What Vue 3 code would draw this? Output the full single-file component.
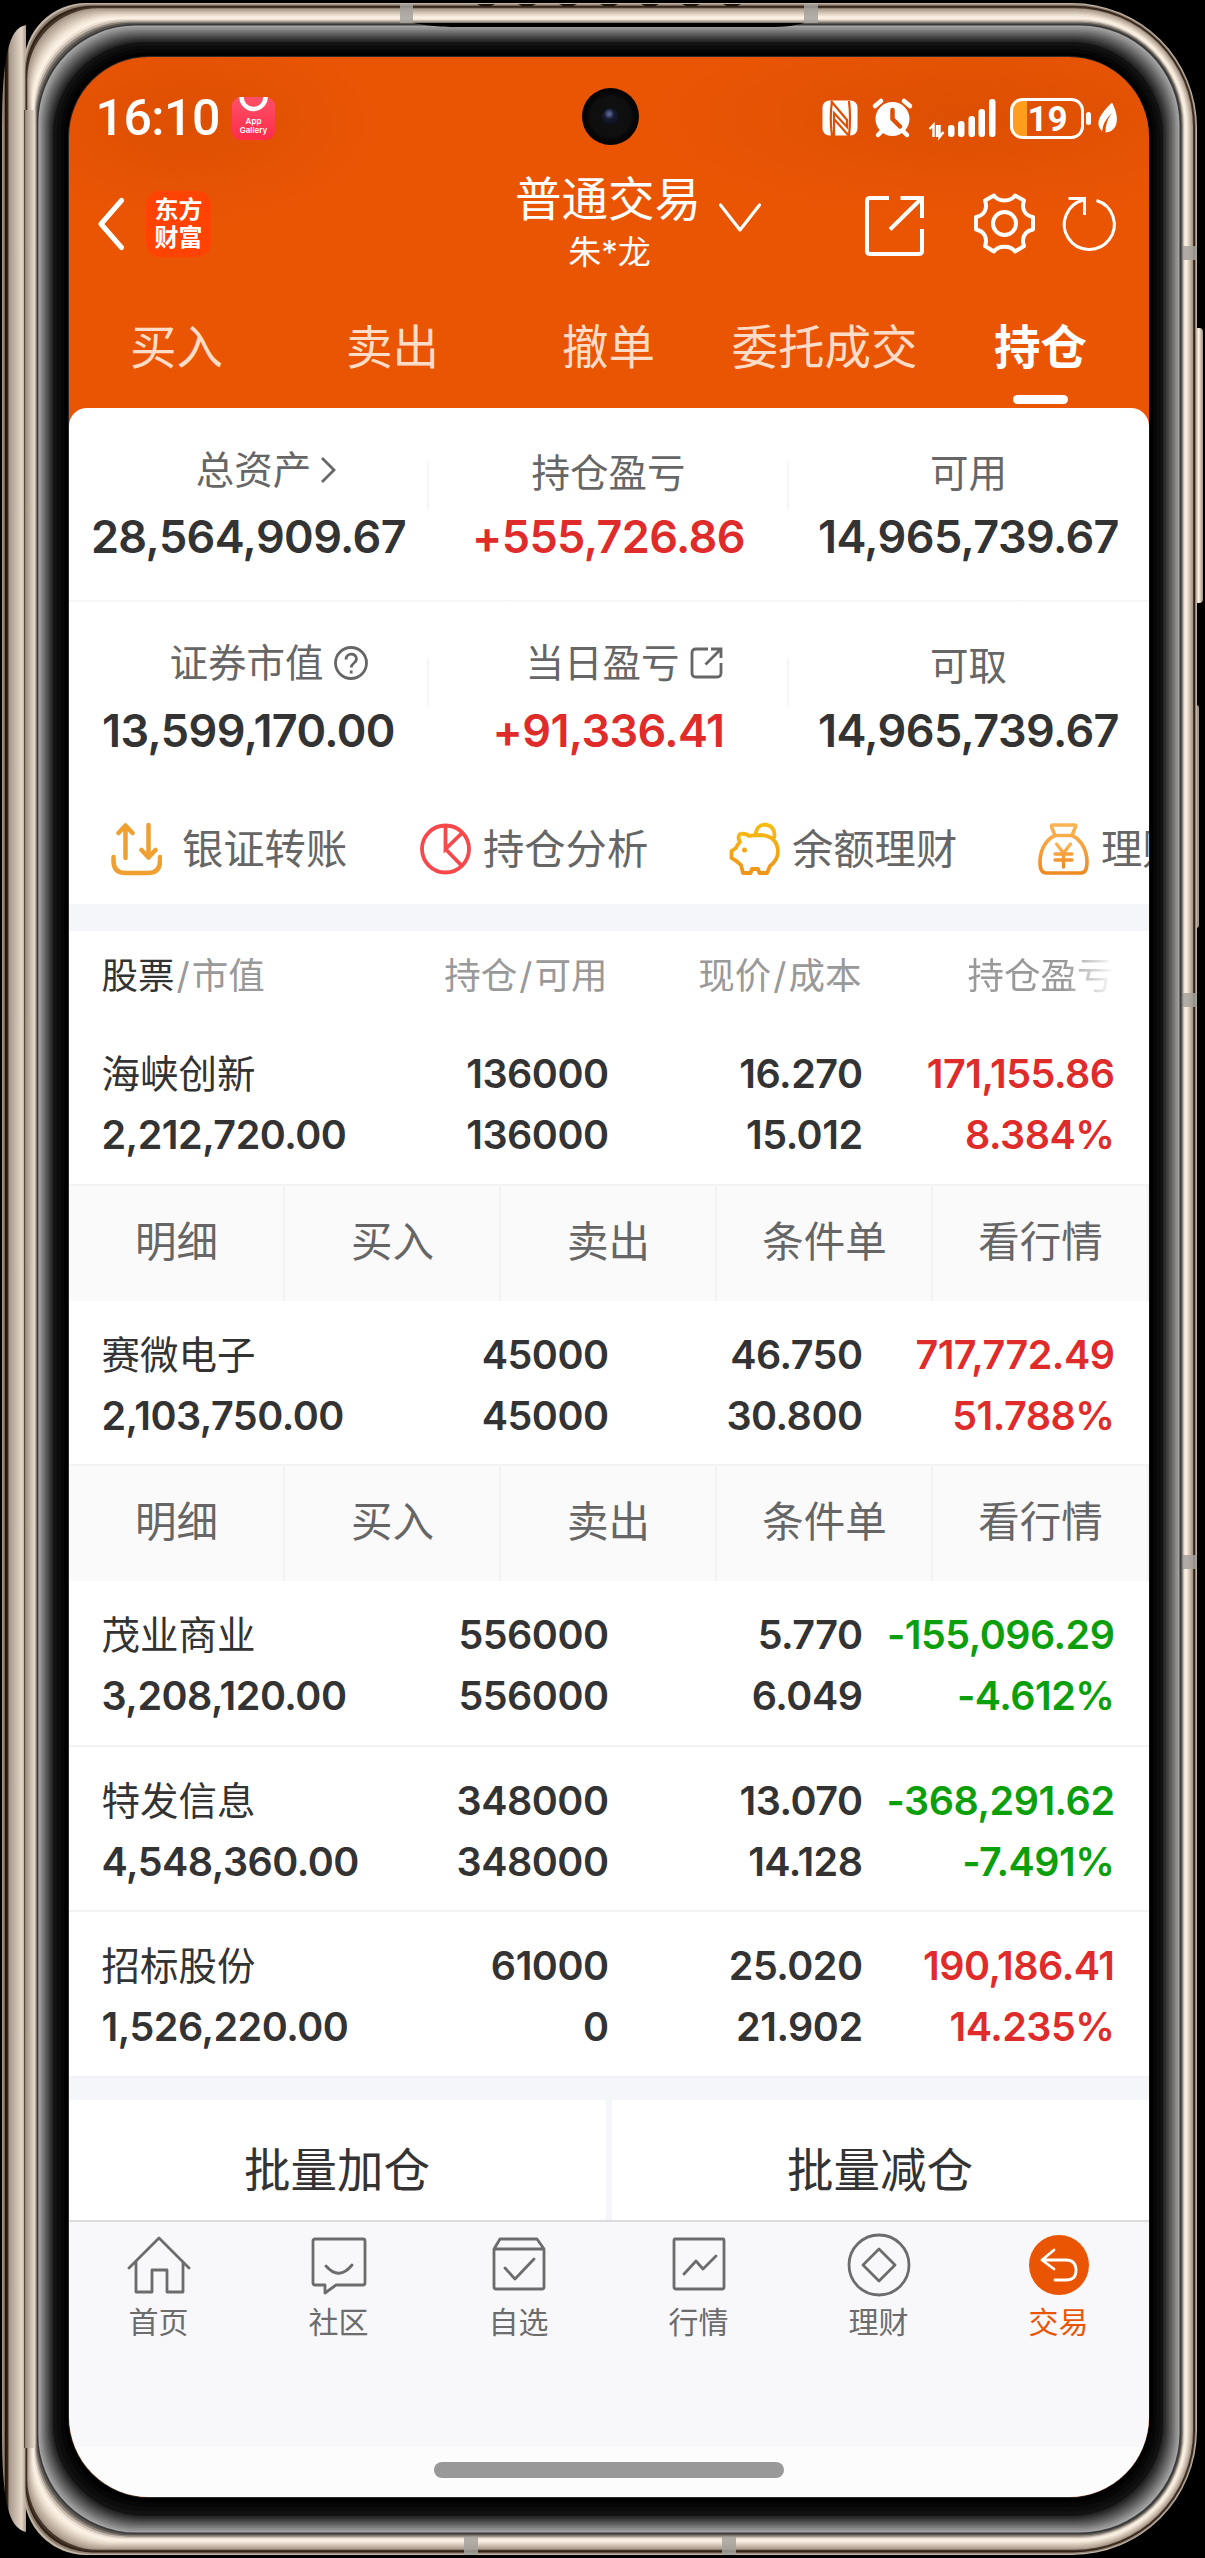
<template>
  <div class="stage">
    <svg class="phone" width="1205" height="2558" viewBox="0 0 1205 2558" aria-hidden="true">
      <defs>
        <linearGradient id="backPanel" x1="2" x2="25" y1="0" y2="0" gradientUnits="userSpaceOnUse">
          <stop offset="0" stop-color="#a5968a" />
          <stop offset="0.1" stop-color="#8a7868" />
          <stop offset="0.15" stop-color="#1d130c" />
          <stop offset="0.26" stop-color="#3a2c20" />
          <stop offset="0.3" stop-color="#a5968a" />
          <stop offset="0.85" stop-color="#e4d6c7" />
          <stop offset="1" stop-color="#b8a797" />
        </linearGradient>
        <linearGradient id="leftRail" x1="24" x2="37" y1="0" y2="0" gradientUnits="userSpaceOnUse">
          <stop offset="0" stop-color="#33241a" />
          <stop offset="0.12" stop-color="#9c8d7e" />
          <stop offset="0.6" stop-color="#d2c4b4" />
          <stop offset="0.8" stop-color="#e6d8c8" />
          <stop offset="0.9" stop-color="#b3a697" />
          <stop offset="1" stop-color="#5a5651" />
        </linearGradient>
        <linearGradient id="sideKey" x1="0" x2="1" y1="0" y2="0">
          <stop offset="0" stop-color="#6a5c50" />
          <stop offset="0.5" stop-color="#fff5e6" />
          <stop offset="1" stop-color="#a09080" />
        </linearGradient>
      </defs>
      <path d="M26 25C8 28 2 60 2 130V2430C2 2500 8 2528 26 2532Z" fill="url(#backPanel)" />
      <rect x="1194" y="328" width="9" height="275" rx="4" fill="url(#sideKey)" />
      <rect x="1192" y="705" width="7" height="223" rx="3" fill="#a39589" />
      <path v-for="(ring, i) in rings" :key="i" :d="ring.d" :fill="ring.fill" />
      <rect x="24" y="110" width="13" height="2338" fill="url(#leftRail)" />
      <path d="M413 23H804C790 27 780 27 760 27H460C435 27 425 25 413 23Z" fill="#000" />
      <rect v-for="(b, i) in bands" :key="'b' + i" :x="b[0]" :y="b[1]" :width="b[2]" :height="b[3]" fill="#a5a29c" opacity="0.85" />
      <path v-for="x in grille" :key="x" :d="`M${x} 4h18l-4 2h-10z`" fill="#1b120c" />
    </svg>

    <div class="screen">
      <header class="top">
        <div class="status">
          <span class="clock">16:10</span>
          <span class="gallery">
            <svg width="43" height="20" viewBox="0 0 43 20"><path d="M9.500 0a12 12 0 0 0 24 0" fill="none" stroke="#fff" stroke-width="4.500" /></svg>
            <span>App<br>Gallery</span>
          </span>
          <span class="camera"><i></i></span>
          <svg class="status-icons" width="280" height="44" viewBox="840 96 280 44" fill="#fff">
            <!-- nfc -->
            <rect x="822.500" y="100.500" width="35" height="35" rx="7" />
            <path d="M832 101Q829.500 118 832 136M831 101 847 120V127L834 113V136M849 101Q851 118 849 136L834 119" fill="none" stroke="#de5003" stroke-width="2.200" />
            <!-- alarm -->
            <circle cx="892.500" cy="119" r="17" />
            <path d="M875 106 881 101M910 106 904 101" stroke="#fff" stroke-width="4.500" stroke-linecap="round" />
            <path d="M878 135 883 130M907 135 902 130" stroke="#fff" stroke-width="4.500" stroke-linecap="round" />
            <path d="M892.500 110V119L900 126.500" fill="none" stroke="#de5003" stroke-width="4.500" stroke-linecap="round" stroke-linejoin="round" />
            <!-- signal -->
            <path d="M929.500 129 933.500 125V137M937 125V137M939.500 125V137L943.500 132" fill="none" stroke="#fff" stroke-width="2.400" />
            <rect x="948" y="125" width="6.500" height="12" rx="3" />
            <rect x="958" y="121" width="6.500" height="16" rx="3" />
            <rect x="968.500" y="116" width="6.500" height="21" rx="3" />
            <rect x="978.500" y="109" width="6.500" height="28" rx="3" />
            <rect x="989" y="99" width="6.500" height="38" rx="3" />
            <!-- battery -->
            <path d="M1020 101H1027V136H1020Q1013 136 1013 129V108Q1013 101 1020 101Z" fill="#ff9d1c" />
            <rect x="1011.500" y="99.500" width="71" height="38" rx="11" fill="none" stroke="#fff" stroke-width="3" />
            <rect x="1086" y="112" width="5" height="13" rx="2.500" />
            <text x="1047.500" y="131" text-anchor="middle" class="battery-text">19</text>
            <!-- leaf -->
            <path d="M1112 102.500Q1120 118 1115 127 1112 132 1105.500 132.500 1105 122 1112 113 1103 121 1102 131.500 1096 125 1100 117 1104 110 1112 102.500Z" />
          </svg>
        </div>

        <div class="nav">
          <svg class="back" width="30" height="54" viewBox="0 0 30 54"><path d="M25.500 3.500 5 27 25.500 50.500" fill="none" stroke="#fff" stroke-width="5" stroke-linecap="round" stroke-linejoin="round" /></svg>
          <div class="logo"><span>东方</span><span>财富</span></div>
          <div class="title">
            <div class="name">普通交易</div>
            <div class="user">朱*龙</div>
          </div>
          <svg class="down" width="44" height="32" viewBox="0 0 44 32"><path d="M2.500 3 22 28 41.500 3" fill="none" stroke="#fff" stroke-width="3.200" stroke-linejoin="round" stroke-linecap="round" /></svg>
          <svg class="tools" width="256" height="64" viewBox="862 192 256 64" fill="none" stroke="#fff" stroke-width="4">
            <path d="M888 198H869q-3 0-3 3v50q0 3 3 3h49q3 0 3-3V229" />
            <path d="M899.500 198H921v20M920 199 889 229.500" />
            <path d="M993 195.500C997 202 1010 202 1014 195.500L1023 200.500C1020 209 1024 215.500 1032 217V229.500C1024 231 1020 238 1023 246L1014 251.500C1010 245 997 245 993 251.500L984 246C987 238 983 231 975 229.500V217C983 215.500 987 209 984 200.500Z" stroke-linejoin="round" />
            <circle cx="1003.500" cy="223.500" r="11.500" />
            <path d="M1095.500 200.500A25 25 0 1 1 1083 200" stroke-width="3" />
            <path d="M1067.500 198.500H1083.500V215" stroke-width="3" />
          </svg>
        </div>

        <nav class="tabs">
          <div v-for="tab in tabs" :key="tab" class="tab" :class="{ active: tab === '持仓' }">{{ tab }}</div>
        </nav>
      </header>

      <main class="content">
        <section class="summary">
          <div v-for="(row, i) in summary" :key="i" class="summary-row">
            <div v-for="cell in row" :key="cell.label" class="cell">
              <div class="label" :class="cell.icon || 'plain'">
                <span>{{ cell.label }}</span>
                <svg v-if="cell.icon === 'arrow'" width="20" height="30" viewBox="0 0 20 30"><path d="M3 3 15 15 3 27" /></svg>
                <svg v-if="cell.icon === 'help'" width="34" height="34" viewBox="0 0 34 34">
                  <circle cx="17" cy="17" r="15.500" />
                  <path d="M12 13.500c0-7 10.500-7 10.500-.5 0 4-5.300 4-5.300 8.500M17.200 24.500v3" />
                </svg>
                <svg v-if="cell.icon === 'open'" width="34" height="34" viewBox="0 0 34 34">
                  <path d="M18 3H6Q2 3 2 7V27Q2 31 6 31H27Q31 31 31 27V17M21 3H31V12M30.500 3.500 15.500 18.500" />
                </svg>
              </div>
              <div class="figure" :class="{ up: cell.value.startsWith('+') }">{{ cell.value }}</div>
            </div>
          </div>
        </section>

        <section class="shortcuts">
          <div class="shortcut wide">
            <svg width="51" height="54" viewBox="0 0 51 54" fill="none" stroke="#f0a030" stroke-width="4.500" stroke-linecap="round" stroke-linejoin="round">
              <path d="M14.500 36V4M7.500 11l7-7.500 7 7.500M37.500 3V35M30.500 28l7 7.500 7-7.500M2.500 35v4q0 12 12 12H37q12 0 12-12V35" />
            </svg>
            <span>银证转账</span>
          </div>
          <div class="shortcut">
            <svg width="51" height="54" viewBox="0 0 51 54" fill="none" stroke="#f7484b" stroke-width="3.800">
              <circle cx="25.500" cy="27" r="23.500" />
              <path d="M25.500 3V27L42 11M25.500 27 42 44" />
            </svg>
            <span>持仓分析</span>
          </div>
          <div class="shortcut">
            <svg width="51" height="54" viewBox="0 0 51 54" fill="none" stroke="url(#pig)" stroke-width="3.800" stroke-linejoin="round">
              <defs><linearGradient id="pig" x1="0" y1="0" x2="0" y2="1"><stop offset="0" stop-color="#f6bd12" /><stop offset="1" stop-color="#ef9518" /></linearGradient></defs>
              <path d="M11 12Q8 15 11 20Q8 23 7 26L2.500 29V36Q7 38 12 43L14 51H21.500L23 47H29L30.500 51H38L41 44Q49 38 49 29Q48 14 32 13Q25 13 20 14Q17 11 11 12ZM26.500 12Q28 2.500 36.500 2.500Q46 4 45.500 14L44 18" />
              <circle cx="15.500" cy="28" r="2.500" fill="#f0a818" stroke="none" />
            </svg>
            <span>余额理财</span>
          </div>
          <div class="shortcut">
            <svg width="51" height="54" viewBox="0 0 51 54" fill="none" stroke="url(#bag)" stroke-width="3.600" stroke-linejoin="round" stroke-linecap="round">
              <defs><linearGradient id="bag" x1="0" y1="0" x2="0" y2="1"><stop offset="0" stop-color="#fbb455" /><stop offset="1" stop-color="#ee8a22" /></linearGradient></defs>
              <path d="M14 3H37Q38.500 3 37 6L34 13.500H17L14 6Q13 3 14 3ZM17 13.500C7 18 2 29 2 40Q2 51 8 51H43Q49 51 49 40C49 29 44 18 34 13.500" />
              <path d="M18.500 22 25.500 31 32.500 22M17 32H34M17 38H34M25.500 31V45" stroke-width="3.300" />
            </svg>
            <span>理财</span>
          </div>
        </section>

        <div class="gap"></div>

        <section class="holdings">
          <div class="holding-head">
            <span><b>股票</b><em>/</em>市值</span>
            <span>持仓<em>/</em>可用</span>
            <span>现价<em>/</em>成本</span>
            <span class="faded">持仓盈亏</span>
          </div>
          <template v-for="h in holdings" :key="h.name">
            <div class="holding">
              <div><span class="stock">{{ h.name }}</span><span>{{ h.value }}</span></div>
              <div><span>{{ h.total }}</span><span>{{ h.usable }}</span></div>
              <div><span>{{ h.price }}</span><span>{{ h.cost }}</span></div>
              <div :class="h.profit.startsWith('-') ? 'loss' : 'up'"><span>{{ h.profit }}</span><span>{{ h.rate }}</span></div>
            </div>
            <div v-if="h.open" class="actions">
              <span v-for="a in actions" :key="a">{{ a }}</span>
            </div>
          </template>
        </section>

        <section class="batch">
          <div>批量加仓</div>
          <div>批量减仓</div>
        </section>
      </main>

      <footer class="tabbar">
        <div v-for="item in menu" :key="item.label" class="menu" :class="{ current: item.current }">
          <svg width="64" height="64" viewBox="0 0 64 64">
            <circle v-if="item.current" cx="32" cy="32" r="30" fill="#ea5504" stroke="none" />
            <path :d="item.path" />
          </svg>
          <span>{{ item.label }}</span>
        </div>
      </footer>
      <div class="home-area"><div class="home-bar"></div></div>
    </div>
  </div>
</template>

<script setup>
const tabs = ['买入', '卖出', '撤单', '委托成交', '持仓']

const summary = [
  [
    { label: '总资产', value: '28,564,909.67', icon: 'arrow' },
    { label: '持仓盈亏', value: '+555,726.86' },
    { label: '可用', value: '14,965,739.67' }
  ],
  [
    { label: '证券市值', value: '13,599,170.00', icon: 'help' },
    { label: '当日盈亏', value: '+91,336.41', icon: 'open' },
    { label: '可取', value: '14,965,739.67' }
  ]
]

const holdings = [
  { name: '海峡创新', value: '2,212,720.00', total: '136000', usable: '136000', price: '16.270', cost: '15.012', profit: '171,155.86', rate: '8.384%', open: true },
  { name: '赛微电子', value: '2,103,750.00', total: '45000', usable: '45000', price: '46.750', cost: '30.800', profit: '717,772.49', rate: '51.788%', open: true },
  { name: '茂业商业', value: '3,208,120.00', total: '556000', usable: '556000', price: '5.770', cost: '6.049', profit: '-155,096.29', rate: '-4.612%' },
  { name: '特发信息', value: '4,548,360.00', total: '348000', usable: '348000', price: '13.070', cost: '14.128', profit: '-368,291.62', rate: '-7.491%' },
  { name: '招标股份', value: '1,526,220.00', total: '61000', usable: '0', price: '25.020', cost: '21.902', profit: '190,186.41', rate: '14.235%' }
]

const actions = ['明细', '买入', '卖出', '条件单', '看行情']

const menu = [
  { label: '首页', path: 'M2 35 32 5 62 35M9 29V59H25V37H40V59H56V29' },
  { label: '社区', path: 'M8 6H56Q58 6 58 8V50Q58 52 56 52H29L18 60V52H8Q6 52 6 50V8Q6 6 8 6ZM19 33Q32 48 45 32' },
  { label: '自选', path: 'M7 16 13 6H50L57 16V54Q57 56 55 56H9Q7 56 7 54ZM7 16H57M18 35 28 46 47 26' },
  { label: '行情', path: 'M8 6H56Q57 6 57 8V54Q57 56 55 56H9Q7 56 7 54V8Q7 6 8 6ZM17 41 29 28 36 36 49 23' },
  { label: '理财', path: 'M2 32A30 30 0 1 1 62 32A30 30 0 1 1 2 32ZM32 16 48 32 32 48 16 32Z' },
  { label: '交易', path: 'M27 17 15 27 27 36M15 27H39Q49 27 49 37.500Q49 47 39 47H28', current: true }
]

// metal frame and glass bezel: nested shapes shaded from the outside in
const outer = [24, 3, 1197, 2555, 62, 125]
const inner = [37, 24, 1181, 2534, 98, 100]
const glass = [53, 42, 1163, 2516, 92, 92]
const screen = [68, 56, 1149.5, 2498, 81, 81]

const shape = ([l, t, r, b, rl, rr]) =>
  `M${l + rl} ${t}H${r - rr}A${rr} ${rr} 0 0 1 ${r} ${t + rr}V${b - rr}A${rr} ${rr} 0 0 1 ${r - rr} ${b}` +
  `H${l + rl}A${rl} ${rl} 0 0 1 ${l} ${b - rl}V${t + rl}A${rl} ${rl} 0 0 1 ${l + rl} ${t}Z`

const between = (a, b, t) => a.map((v, i) => v + (b[i] - v) * t)

const blend = (from, to, colors) =>
  colors.map((fill, i) => ({ d: shape(between(from, to, i / colors.length)), fill }))

const rings = [
  ...blend(outer, inner, ['#c3b5a6', '#8f8072', '#33241a', '#46362a', '#a89889', '#b8a899', '#c4b5a6', '#d3c5b6', '#e0d3c4', '#ede1d3', '#f6ecde', '#fbf2e5', '#ede2d5', '#c9bdb0', '#8d857c', '#5a5651']),
  ...blend(inner, glass, ['#3a3a3a', '#a2a2a2', '#959595', '#898989', '#7b7b7b', '#6e6e6e', '#616161', '#555', '#484848', '#3c3c3c', '#303030', '#262626']),
  ...blend(glass, screen, ['#121212', '#0c0c0c', '#060606', '#000']),
  { d: shape(screen), fill: '#2a2a2a' }
]

const bands = [
  [400, 4, 13, 19],
  [804, 4, 14, 19],
  [464, 2537, 14, 18],
  [722, 2537, 14, 18],
  [1183, 246, 14, 14],
  [1183, 993, 14, 14],
  [1183, 1555, 14, 14]
]

const grille = [477, 518, 559, 600, 641, 682, 723]
</script>

<style>
body {
  margin: 0;
  background: #000;
}
</style>

<style scoped>
.stage {
  position: relative;
  box-sizing: border-box;
  width: 1205px;
  height: 2558px;
  padding: 57px 0 0 68.500px;
  background: #000;
  font-family: Inter, "Noto Sans CJK SC", sans-serif;
  color: #333;
}

svg {
  display: block;
  flex: none;
}

.phone {
  position: absolute;
  top: 0;
  left: 0;
}

.screen {
  position: relative;
  display: flex;
  flex-direction: column;
  width: 1080px;
  height: 2440px;
  border-radius: 80px;
  overflow: hidden;
  background: #ea5504;
}

/* header */
.top {
  height: 351px;
  color: #fff;
  background:
    radial-gradient(ellipse 190px 100px at 120px 65px, rgba(200, 70, 0, 0.4), transparent),
    radial-gradient(ellipse 320px 100px at 900px 60px, rgba(200, 70, 0, 0.4), transparent);
}

.status {
  display: flex;
  align-items: center;
  height: 122px;
  padding: 0 28.500px 0 27px;
}

.clock {
  width: 136.500px;
  font-family: Roboto, sans-serif;
  font-size: 50px;
  font-weight: 500;
  line-height: 60px;
  letter-spacing: -0.5px;
}

.gallery {
  width: 43px;
  height: 43px;
  border-radius: 9px;
  background: linear-gradient(#ff5068, #fd2c4b);
  font-size: 8px;
  font-weight: 600;
  line-height: 9px;
  text-align: center;
}

.camera {
  position: absolute;
  top: 31px;
  left: 513px;
  display: grid;
  place-items: center;
  width: 57px;
  height: 57px;
  border-radius: 50%;
  background: radial-gradient(circle, #0f0f10 0 50%, #060606 58%, #000);
}

.camera i {
  width: 17px;
  height: 17px;
  border-radius: 50%;
  background: radial-gradient(circle at 42% 35%, #59618a 0 8%, #151a30 35%, #07080f);
}

.status-icons {
  margin-left: auto;
  overflow: visible;
}

.battery-text {
  font-family: Roboto, sans-serif;
  font-size: 35px;
  font-weight: 700;
}

.nav {
  display: flex;
  align-items: center;
  height: 90px;
  padding: 0 30px 0 27px;
}

.logo {
  display: grid;
  grid-template-rows: 28px 28px;
  align-content: center;
  width: 65px;
  height: 66px;
  margin-left: 20.500px;
  border-radius: 14px;
  background: #ff4304;
  font-size: 24px;
  font-weight: 700;
  line-height: 28px;
  text-align: center;
}

.title {
  width: 190px;
  margin-left: 302px;
  text-align: center;
}

.name {
  font-size: 46.500px;
  line-height: 56px;
}

.user {
  padding-left: 3px;
  font-size: 33px;
  line-height: 51px;
}

.down {
  margin: -12px 0 0 15px;
}

.tools {
  margin-left: auto;
}

.tabs {
  display: grid;
  grid-template-columns: repeat(5, 216px);
  height: 139px;
}

.tab {
  display: flex;
  flex-direction: column;
  align-items: center;
  padding-top: 46px;
  font-size: 46.500px;
  line-height: 64px;
  color: #ffdcc8;
}

.tab.active {
  font-weight: 700;
  color: #fff;
}

.tab.active::after {
  content: '';
  width: 55px;
  height: 9px;
  margin-top: 16px;
  border-radius: 5px;
  background: #fff;
}

/* account summary */
.content {
  height: 1812px;
  border-radius: 18px 18px 0 0;
  background: #fff;
}

.summary-row {
  display: grid;
  grid-template-columns: repeat(3, 360px);
  height: 192px;
}

.summary-row:first-child {
  background: linear-gradient(#f4f4f5, #f4f4f5) 0 100% / 100% 1.500px no-repeat;
  height: 193.500px;
}

.cell {
  text-align: center;
  background: linear-gradient(#f5f5f5, #f5f5f5) 100% 55px / 2px 48px no-repeat;
}

.cell:last-child {
  background: none;
}

.label {
  display: flex;
  justify-content: center;
  align-items: center;
  box-sizing: border-box;
  height: 99px;
  padding-bottom: 12px;
  padding-top: 36px;
  font-size: 38.500px;
  line-height: 50px;
  color: #666;
}

.label.plain {
  padding-top: 42px;
}

.label svg {
  fill: none;
  stroke: #666;
  stroke-width: 2.800;
}

.label.arrow svg {
  margin: 0 -38px 0 8px;
}

.label.help svg {
  margin: 0 -40px 0 10px;
}

.label.open svg {
  margin: 0 -32px 0 10px;
}

.figure {
  font-size: 45px;
  font-weight: 600;
  line-height: 60px;
  letter-spacing: -0.6px;
}

.up {
  color: #e02b2b;
}

.loss {
  color: #0c9f0c;
}

/* shortcut strip, runs past the right edge */
.shortcuts {
  display: flex;
  align-items: center;
  height: 110px;
  padding-left: 42.500px;
  overflow: hidden;
}

.shortcut {
  display: flex;
  flex: none;
  align-items: center;
  gap: 12px;
  width: 309px;
  font-size: 41.300px;
  line-height: 60px;
  color: #666;
  white-space: nowrap;
}

.shortcut.wide {
  gap: 20px;
}

.gap {
  height: 27.500px;
  background: #f5f6f9;
}

/* positions */
.holding-head,
.holding {
  display: grid;
  grid-template-columns: 299px 208px 254px 252px;
  padding-left: 33px;
  text-align: right;
}

.holding-head {
  height: 89px;
  font-size: 36.500px;
  line-height: 91px;
  color: #999;
}

.holding-head span:not(:first-child) {
  padding-right: 1px;
}

.holding-head span:first-child,
.holding div:first-child {
  text-align: left;
}

.holding-head b {
  font-weight: 400;
  color: #333;
}

.holding-head em {
  margin: 0 2px;
  font-style: normal;
}

.faded {
  mask-image: linear-gradient(90deg, #000 80%, transparent);
}

.holding {
  box-sizing: border-box;
  height: 165.500px;
  padding-top: 24px;
  background: linear-gradient(#f3f3f4, #f3f3f4) 0 100% / 100% 2px no-repeat;
  font-size: 39.500px;
  font-weight: 600;
  line-height: 61px;
  letter-spacing: -0.5px;
}

.holding span {
  display: block;
}

.holding .stock {
  font-size: 38.500px;
  font-weight: 400;
  letter-spacing: 0;
}

.actions {
  display: grid;
  grid-template-columns: repeat(5, 216px);
  height: 115px;
  background: #fafafa;
  font-size: 41.500px;
  line-height: 113px;
  text-align: center;
  color: #666;
}

.actions span {
  box-shadow: inset -2px 0 #f2f2f3;
}

.batch {
  display: flex;
  gap: 6px;
  padding-top: 22px;
  background: #f5f6f9;
}

.batch div {
  flex: 1;
  height: 121px;
  background: #fff;
  font-size: 46.500px;
  line-height: 140px;
  text-align: center;
}

/* bottom tabs */
.tabbar {
  position: relative;
  display: grid;
  grid-template-columns: repeat(6, 180px);
  box-sizing: border-box;
  height: 227px;
  border-top: 2px solid #dcdcdf;
  background: #f8f8fb;
}

.menu {
  display: flex;
  flex-direction: column;
  align-items: center;
  padding-top: 11px;
  font-size: 30px;
  line-height: 44px;
  color: #6c6c6c;
}

.menu svg {
  margin-bottom: 3px;
  fill: none;
  stroke: #6c6c6c;
  stroke-width: 2.800;
  stroke-linecap: round;
  stroke-linejoin: round;
}

.menu.current {
  color: #ea5504;
}

.menu.current svg {
  stroke: #fff;
}

.home-area {
  flex: 1;
  padding: 15px 0 0 365px;
  background: #fcfcfc;
}

.home-bar {
  width: 350px;
  height: 16px;
  border-radius: 8px;
  background: #999;
}
</style>
